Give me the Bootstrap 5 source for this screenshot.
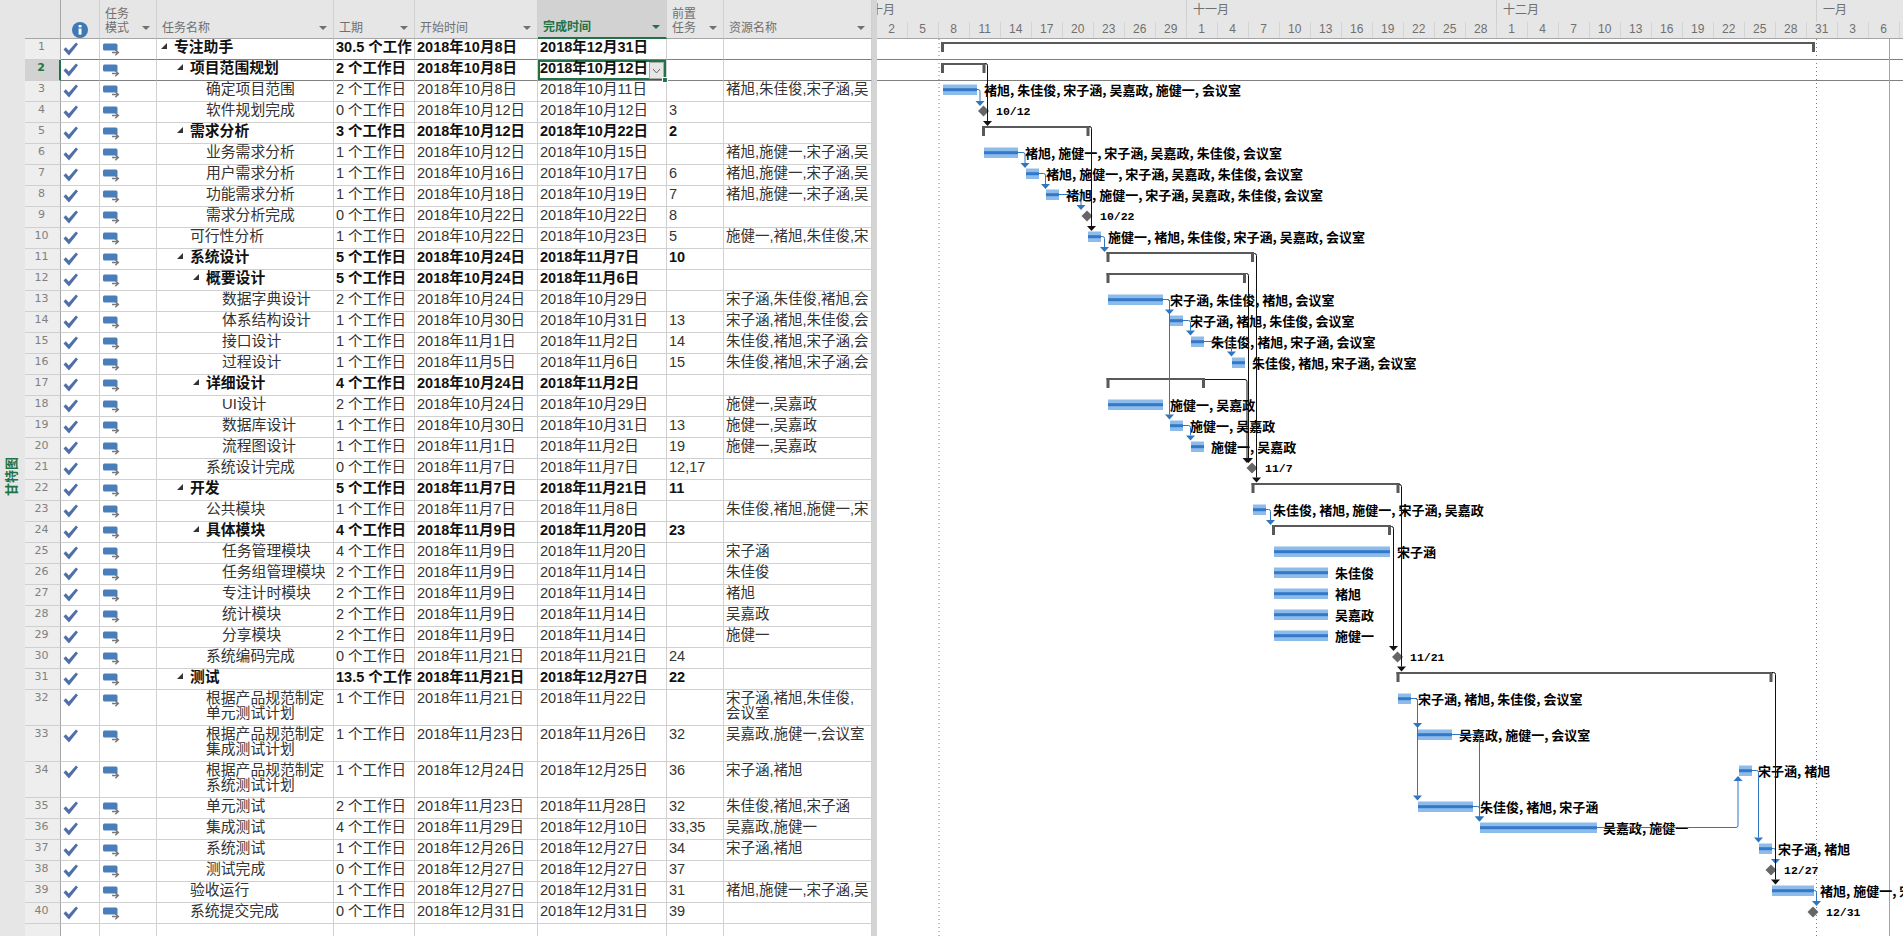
<!DOCTYPE html>
<html lang="zh-CN">
<head>
  <meta charset="UTF-8">
  <meta name="viewport" content="width=device-width, initial-scale=1.0">
  <title>专注助手 - 甘特图</title>
  <link rel="stylesheet" href="https://cdn.jsdelivr.net/npm/bootstrap@5.3.3/dist/css/bootstrap.min.css">
  <style>
    body { background: #fff; font-family: "Liberation Sans", "Noto Sans CJK SC", sans-serif; overflow: hidden; }
    .app-frame { width: 1903px; height: 936px; overflow: hidden; }
    .view-strip { width: 25px; background: #e6e6e6; padding-top: 18px; padding-right: 3px; }
    .view-label { writing-mode: vertical-rl; text-orientation: sideways; transform: rotate(180deg); color: #217346; font-weight: 700; font-size: 13px; font-family: "Noto Sans CJK SC", sans-serif; }
    .grid-pane { width: 847px; }
    .split-bar { width: 5px; background: #d4d4d4; }
    .chart-pane { width: 1026px; }

    .task-grid { width: 847px; table-layout: fixed; border-collapse: separate; border-spacing: 0; margin: 0; font-size: 14.5px; line-height: 15px; color: #333; }
    .task-grid th, .task-grid td { padding: 1px 2px 0; border-width: 0 1px 1px 0; border-style: solid; border-color: #d0d0d0; vertical-align: top; white-space: nowrap; overflow: hidden; box-shadow: none; background: #fff; color: #333; }
    .task-grid thead tr { height: 39px; }
    .task-grid tbody tr { height: 21px; }
    .task-grid tbody tr.tall-row { height: 36px; }
    .task-grid th { position: relative; background: #e6e6e6; color: #707070; font-weight: 400; font-size: 12px; line-height: 14px; vertical-align: bottom; padding: 0 5px 3px; border-bottom-color: #a6a6a6; }
    .task-grid th.col-active { background: #d2d2d2; color: #217346; font-weight: 700; border-bottom: 2px solid #217346; }
    .task-grid th.col-rownum { background: #e6e6e6; border-right-color: #a6a6a6; }
    .task-grid th.col-info { border-right-color: #d0d0d0; padding: 0; }
    .sort-mark { position: absolute; right: 6px; bottom: 8px; width: 0; height: 0; border-left: 4px solid transparent; border-right: 4px solid transparent; border-top: 4px solid #707070; }
    .col-active .sort-mark { border-top-color: #217346; }
    .info-mark { display: block; margin: 7px auto 0; }

    .task-grid td.row-num { background: #eeeeee; color: #808080; text-align: center; padding: 0 2px 0 0; line-height: 16px; border-right-color: #a6a6a6; font-family: "DejaVu Sans", sans-serif; font-size: 11px; }
    .task-grid tr.sel-row td.row-num { background: #d2d2d2; color: #217346; font-weight: 700; border-right: 2px solid #217346; }
    .task-grid tr.sel-row td:not(.row-num), .task-grid tr.pre-sel td:not(.row-num) { border-bottom-color: #808080; }
    .task-grid tr.is-summary td:not(.row-num) { font-weight: 700; color: #111; }
    .task-grid td.icon-cell { padding: 3px 0 0 2px; line-height: 0; }
    .task-grid td.mode-cell { padding: 4px 0 0 3px; line-height: 0; }
    .task-grid td.name-cell { white-space: normal; font-size: 14.8px; }
    .fold-mark { display: inline-block; width: 0; height: 0; margin-left: -13px; margin-right: 7px; vertical-align: 3px; border-style: solid; border-width: 0 0 6px 6px; border-color: transparent transparent #333 transparent; }
    .task-grid td.cell-active { position: relative; box-shadow: inset 0 0 0 2px #217346; border-bottom-color: #217346; overflow: visible; }
    .drop-btn { position: absolute; right: 2px; top: 2px; width: 15px; height: 17px; background: #e6e6e6; border: 1px solid #ababab; }
    .fill-handle { position: absolute; right: -2px; bottom: -3px; width: 6px; height: 6px; background: #217346; border: 1px solid #fff; z-index: 2; }

    .time-head { height: 39px; background: #e6e6e6; border-bottom: 1px solid #a6a6a6; color: #707070; font-size: 12px; overflow: hidden; }
    .month-row { height: 22px; }
    .month-cell { flex: none; height: 22px; line-height: 21px; padding-left: 6px; overflow: hidden; border-left: 1px solid #cfcfcf; }
    .month-cell:first-child { border-left: 0; padding-left: 0; text-indent: -6px; }
    .tick-row { height: 16px; margin-left: -0.3px; }
    .tick-cell { flex: none; width: 31px; height: 16px; line-height: 15px; text-align: center; border-right: 1px solid #d4d4d4; }
    .chart-canvas { display: block; width: 1026px; height: 897px; }
    .res-text { font: 700 13px "Noto Sans CJK SC", sans-serif; fill: #000; }
    .date-text { font: 700 11.5px "Liberation Mono", monospace; fill: #000; }
  </style>
</head>
<body>
  <svg width="0" height="0" class="position-absolute">
    <symbol id="ico-check" viewBox="0 0 15 14"><path d="M0.5 7.5 L2.8 5.3 L5.8 8.6 L13 0.5 L15 2.2 L6 13.5 Z" fill="#4f6fa8"/></symbol>
    <symbol id="ico-mode" viewBox="0 0 17 14"><path d="M1.5 0.5 H13 Q14.5 0.5 14.5 2 V7.5 H1.5 Q0 7.5 0 6 V2 Q0 0.5 1.5 0.5 Z" fill="#4a7ebb"/><path d="M9 9.5 H15 M12.3 6.8 L15.3 9.5 L12.3 12.2" fill="none" stroke="#7a7a7a" stroke-width="1.5"/></symbol>
  </svg>

  <div class="app-frame d-flex">
    <div class="view-strip d-flex justify-content-center align-items-center">
      <span class="view-label">甘特图</span>
    </div>

    <div class="grid-pane">
      <table class="table task-grid">
        <colgroup>
          <col style="width:36px"><col style="width:39px"><col style="width:57px"><col style="width:177px"><col style="width:81px"><col style="width:123px"><col style="width:129px"><col style="width:57px"><col style="width:148px">
        </colgroup>
        <thead>
          <tr>
            <th class="col-rownum"></th>
            <th class="col-info"><svg class="info-mark" width="16" height="16" viewBox="0 0 16 16"><circle cx="8" cy="8" r="8" fill="#3e79b4"/><rect x="6.6" y="6.6" width="2.9" height="6" fill="#fff"/><rect x="6.6" y="3" width="2.9" height="2.4" fill="#fff"/></svg></th>
            <th>任务<br>模式<i class="sort-mark"></i></th>
            <th>任务名称<i class="sort-mark"></i></th>
            <th>工期<i class="sort-mark"></i></th>
            <th>开始时间<i class="sort-mark"></i></th>
            <th class="col-active">完成时间<i class="sort-mark"></i></th>
            <th>前置<br>任务<i class="sort-mark"></i></th>
            <th>资源名称<i class="sort-mark"></i></th>
          </tr>
        </thead>
        <tbody id="taskRows"></tbody>
      </table>
    </div>

    <div class="split-bar"></div>

    <div class="chart-pane">
      <div class="time-head">
        <div class="month-row d-flex" id="monthRow"></div>
        <div class="tick-row d-flex" id="tickRow"></div>
      </div>
      <svg class="chart-canvas" id="chart" viewBox="877 39 1026 897"></svg>
    </div>
  </div>

  <script>
    const R1 = '褚旭,朱佳俊,宋子涵,吴嘉政,施健一,会议室';
    const R2 = '褚旭,施健一,宋子涵,吴嘉政,朱佳俊,会议室';
    const R3 = '施健一,褚旭,朱佳俊,宋子涵,吴嘉政,会议室';

    // 行: 层级, 名称, 工期, 开始, 完成, 前置, 资源(列内显示的部分), 是否摘要
    const tasks = [
      [1, '专注助手', '30.5 个工作', '10月8日', '12月31日', '', '', 1],
      [2, '项目范围规划', '2 个工作日', '10月8日', '10月12日', '', '', 1],
      [3, '确定项目范围', '2 个工作日', '10月8日', '10月11日', '', '褚旭,朱佳俊,宋子涵,吴'],
      [3, '软件规划完成', '0 个工作日', '10月12日', '10月12日', '3', ''],
      [2, '需求分析', '3 个工作日', '10月12日', '10月22日', '2', '', 1],
      [3, '业务需求分析', '1 个工作日', '10月12日', '10月15日', '', '褚旭,施健一,宋子涵,吴'],
      [3, '用户需求分析', '1 个工作日', '10月16日', '10月17日', '6', '褚旭,施健一,宋子涵,吴'],
      [3, '功能需求分析', '1 个工作日', '10月18日', '10月19日', '7', '褚旭,施健一,宋子涵,吴'],
      [3, '需求分析完成', '0 个工作日', '10月22日', '10月22日', '8', ''],
      [2, '可行性分析', '1 个工作日', '10月22日', '10月23日', '5', '施健一,褚旭,朱佳俊,宋'],
      [2, '系统设计', '5 个工作日', '10月24日', '11月7日', '10', '', 1],
      [3, '概要设计', '5 个工作日', '10月24日', '11月6日', '', '', 1],
      [4, '数据字典设计', '2 个工作日', '10月24日', '10月29日', '', '宋子涵,朱佳俊,褚旭,会'],
      [4, '体系结构设计', '1 个工作日', '10月30日', '10月31日', '13', '宋子涵,褚旭,朱佳俊,会'],
      [4, '接口设计', '1 个工作日', '11月1日', '11月2日', '14', '朱佳俊,褚旭,宋子涵,会'],
      [4, '过程设计', '1 个工作日', '11月5日', '11月6日', '15', '朱佳俊,褚旭,宋子涵,会'],
      [3, '详细设计', '4 个工作日', '10月24日', '11月2日', '', '', 1],
      [4, 'UI设计', '2 个工作日', '10月24日', '10月29日', '', '施健一,吴嘉政'],
      [4, '数据库设计', '1 个工作日', '10月30日', '10月31日', '13', '施健一,吴嘉政'],
      [4, '流程图设计', '1 个工作日', '11月1日', '11月2日', '19', '施健一,吴嘉政'],
      [3, '系统设计完成', '0 个工作日', '11月7日', '11月7日', '12,17', ''],
      [2, '开发', '5 个工作日', '11月7日', '11月21日', '11', '', 1],
      [3, '公共模块', '1 个工作日', '11月7日', '11月8日', '', '朱佳俊,褚旭,施健一,宋'],
      [3, '具体模块', '4 个工作日', '11月9日', '11月20日', '23', '', 1],
      [4, '任务管理模块', '4 个工作日', '11月9日', '11月20日', '', '宋子涵'],
      [4, '任务组管理模块', '2 个工作日', '11月9日', '11月14日', '', '朱佳俊'],
      [4, '专注计时模块', '2 个工作日', '11月9日', '11月14日', '', '褚旭'],
      [4, '统计模块', '2 个工作日', '11月9日', '11月14日', '', '吴嘉政'],
      [4, '分享模块', '2 个工作日', '11月9日', '11月14日', '', '施健一'],
      [3, '系统编码完成', '0 个工作日', '11月21日', '11月21日', '24', ''],
      [2, '测试', '13.5 个工作', '11月21日', '12月27日', '22', '', 1],
      [3, '根据产品规范制定<br>单元测试计划', '1 个工作日', '11月21日', '11月22日', '', '宋子涵,褚旭,朱佳俊,<br>会议室'],
      [3, '根据产品规范制定<br>集成测试计划', '1 个工作日', '11月23日', '11月26日', '32', '吴嘉政,施健一,会议室'],
      [3, '根据产品规范制定<br>系统测试计划', '1 个工作日', '12月24日', '12月25日', '36', '宋子涵,褚旭'],
      [3, '单元测试', '2 个工作日', '11月23日', '11月28日', '32', '朱佳俊,褚旭,宋子涵'],
      [3, '集成测试', '4 个工作日', '11月29日', '12月10日', '33,35', '吴嘉政,施健一'],
      [3, '系统测试', '1 个工作日', '12月26日', '12月27日', '34', '宋子涵,褚旭'],
      [3, '测试完成', '0 个工作日', '12月27日', '12月27日', '37', ''],
      [2, '验收运行', '1 个工作日', '12月27日', '12月31日', '31', '褚旭,施健一,宋子涵,吴'],
      [2, '系统提交完成', '0 个工作日', '12月31日', '12月31日', '39', '']
    ];

    // 渲染任务表
    const check = '<svg width="15" height="14"><use href="#ico-check"/></svg>';
    const mode = '<svg width="17" height="14"><use href="#ico-mode"/></svg>';
    const rowsHtml = tasks.map((t, i) => {
      const [lvl, name, dur, start, end, pred, res, summary] = t;
      const num = i + 1;
      const cls = [summary ? 'is-summary' : '', num === 2 ? 'sel-row' : '', num === 1 ? 'pre-sel' : '', name.includes('<br>') ? 'tall-row' : ''].join(' ');
      const fold = summary ? '<i class="fold-mark"></i>' : '';
      const active = num === 2 ? ' class="cell-active"' : '';
      const extras = num === 2 ? '<span class="drop-btn"><svg width="13" height="15" class="d-block"><path d="M3 6 L6.5 10 L10 6" fill="none" stroke="#666"/></svg></span><span class="fill-handle"></span>' : '';
      return `<tr class="${cls}">
        <td class="row-num">${num}</td>
        <td class="icon-cell">${check}</td>
        <td class="mode-cell">${mode}</td>
        <td class="name-cell" style="padding-left:${17 + 16 * (lvl - 1)}px">${fold}${name}</td>
        <td>${dur}</td>
        <td>2018年${start}</td>
        <td${active}>2018年${end}${extras}</td>
        <td>${pred}</td>
        <td>${res}</td>
      </tr>`;
    }).join('');
    document.getElementById('taskRows').innerHTML = rowsHtml +
      '<tr><td class="row-num"></td><td></td><td></td><td></td><td></td><td></td><td></td><td></td><td></td></tr>';

    // 时间刻度
    const months = [['十月', 309], ['十一月', 310], ['十二月', 320], ['一月', 87]];
    document.getElementById('monthRow').innerHTML = months.map(m => `<div class="month-cell" style="width:${m[1]}px">${m[0]}</div>`).join('');
    const ticks = [2,5,8,11,14,17,20,23,26,29,1,4,7,10,13,16,19,22,25,28,1,4,7,10,13,16,19,22,25,28,31,3,6];
    document.getElementById('tickRow').innerHTML = ticks.map(d => `<div class="tick-cell">${d}</div>`).join('');

    // 甘特图
    const rowTop = r => r <= 32 ? 38 + 21 * (r - 1) : r <= 35 ? 689 + 36 * (r - 32) : 797 + 21 * (r - 35);
    const summaries = [[1, 941, 1815], [2, 941, 985.5], [5, 982, 1089.5], [11, 1106.5, 1254], [12, 1106.5, 1246], [17, 1106.5, 1205], [22, 1251.5, 1399.5], [24, 1272, 1391], [31, 1396.5, 1772.5]];
    const bars = [[3, 943, 977], [6, 984, 1018], [7, 1026, 1039], [8, 1046, 1059], [10, 1088, 1101], [13, 1108, 1163], [14, 1170, 1183], [15, 1191, 1204], [16, 1232, 1245], [18, 1108, 1163], [19, 1170, 1183], [20, 1191, 1204], [23, 1253, 1266], [25, 1274, 1390], [26, 1274, 1328], [27, 1274, 1328], [28, 1274, 1328], [29, 1274, 1328], [32, 1398, 1411], [33, 1418, 1452], [34, 1739, 1752], [35, 1418, 1473], [36, 1480, 1597], [37, 1759, 1772], [39, 1772, 1814]];
    const stones = [[4, 983.5], [9, 1087], [21, 1252], [30, 1397.5], [38, 1771], [40, 1813]];
    const resLabels = [[3, 984, R1], [6, 1025, R2], [7, 1046, R2], [8, 1066, R2], [10, 1108, R3], [13, 1170, '宋子涵,朱佳俊,褚旭,会议室'], [14, 1190, '宋子涵,褚旭,朱佳俊,会议室'], [15, 1211, '朱佳俊,褚旭,宋子涵,会议室'], [16, 1252, '朱佳俊,褚旭,宋子涵,会议室'], [18, 1170, '施健一,吴嘉政'], [19, 1190, '施健一,吴嘉政'], [20, 1211, '施健一,吴嘉政'], [23, 1273, '朱佳俊,褚旭,施健一,宋子涵,吴嘉政'], [25, 1397, '宋子涵'], [26, 1335, '朱佳俊'], [27, 1335, '褚旭'], [28, 1335, '吴嘉政'], [29, 1335, '施健一'], [32, 1418, '宋子涵,褚旭,朱佳俊,会议室'], [33, 1459, '吴嘉政,施健一,会议室'], [34, 1758, '宋子涵,褚旭'], [35, 1480, '朱佳俊,褚旭,宋子涵'], [36, 1603, '吴嘉政,施健一'], [37, 1778, '宋子涵,褚旭'], [39, 1820, R2]];
    const dateLabels = [[4, 996, '10/12'], [9, 1100, '10/22'], [21, 1265, '11/7'], [30, 1410, '11/21'], [38, 1784, '12/27'], [40, 1826, '12/31']];

    // x1,y1 出发，水平到 x2，再垂直到箭头尖 y2
    function link(x1, y1, x2, y2, color) {
      const dir = y2 > y1 ? 1 : -1;
      const head = dir * 5;
      return `<path d="M${x1} ${y1} H${x2 - 2} Q${x2} ${y1} ${x2} ${y1 + 2 * dir} V${y2 - head}" fill="none" stroke="${color}"/>` +
        `<path d="M${x2 - 4.5} ${y2 - head} H${x2 + 4.5} L${x2} ${y2} Z" fill="${color}"/>`;
    }
    const blue = [[977, 89.5, 980, 106], [1018, 152.5, 1025, 168], [1039, 173.5, 1045.5, 189], [1059, 194.5, 1081, 210], [1101, 236.5, 1104.5, 252], [1163, 299.5, 1169.5, 314.5], [1163, 299.5, 1169.5, 419.5], [1183, 320.5, 1190.5, 335.5], [1204, 341.5, 1231.5, 356.5], [1183, 425.5, 1190.5, 440.5], [1266, 509.5, 1270.5, 525], [1411, 698.5, 1417.5, 728], [1411, 698.5, 1417.5, 800.5], [1452, 734.5, 1479.5, 821.5], [1473, 806.5, 1479.5, 821.5], [1597, 827.5, 1738, 776], [1752, 770.5, 1758.5, 842.5], [1772, 848.5, 1775.5, 864], [1814, 890.5, 1816.5, 906]];
    const black = [[985, 63.5, 987.5, 126], [1089, 126.5, 1091.5, 231], [1254, 253.5, 1256.5, 482.5], [1246, 273.5, 1248.5, 463], [1205, 379.5, 1247, 463], [1399, 484.5, 1401.5, 671.5], [1391, 526.5, 1393.5, 651], [1772, 672.5, 1775.5, 884.5]];

    let svg = '';
    svg += '<path d="M877 59.5 H1903 M877 80.5 H1903" stroke="#808080"/>';
    svg += '<path d="M939 39 V936 M1816.5 39 V936" stroke="#808080" stroke-dasharray="1 3"/>';
    svg += '<path d="M1889.5 39 V936" stroke="#8db38d"/>';
    resLabels.forEach(([r, x, s]) => { svg += `<text class="res-text" x="${x}" y="${rowTop(r) + 14.5}">${s.replace(/,/g, ', ')}</text>`; });
    dateLabels.forEach(([r, x, s]) => { svg += `<text class="date-text" x="${x}" y="${rowTop(r) + 14}">${s}</text>`; });
    summaries.forEach(([r, x1, x2]) => {
      const y = rowTop(r) + 4;
      svg += `<rect x="${x1}" y="${y}" width="${x2 - x1}" height="2" fill="#595959"/><rect x="${x1}" y="${y}" width="3" height="10" fill="#595959"/><rect x="${x2 - 3}" y="${y}" width="3" height="10" fill="#595959"/>`;
    });
    bars.forEach(([r, x1, x2]) => {
      const y = rowTop(r) + 4.5;
      svg += `<rect x="${x1}" y="${y}" width="${x2 - x1}" height="10.5" fill="#8dbbea"/><rect x="${x1}" y="${y + 3.7}" width="${x2 - x1}" height="3" fill="#3478c8"/>`;
    });
    stones.forEach(([r, x]) => {
      const y = rowTop(r) + 10;
      svg += `<path d="M${x} ${y - 5.5} L${x + 5.5} ${y} L${x} ${y + 5.5} L${x - 5.5} ${y} Z" fill="#666"/>`;
    });
    blue.forEach(l => { svg += link(...l, '#2f75c0'); });
    black.forEach(l => { svg += link(...l, '#111'); });
    document.getElementById('chart').innerHTML = svg;
  </script>
  <script src="https://cdn.jsdelivr.net/npm/bootstrap@5.3.3/dist/js/bootstrap.bundle.min.js"></script>
</body>
</html>
